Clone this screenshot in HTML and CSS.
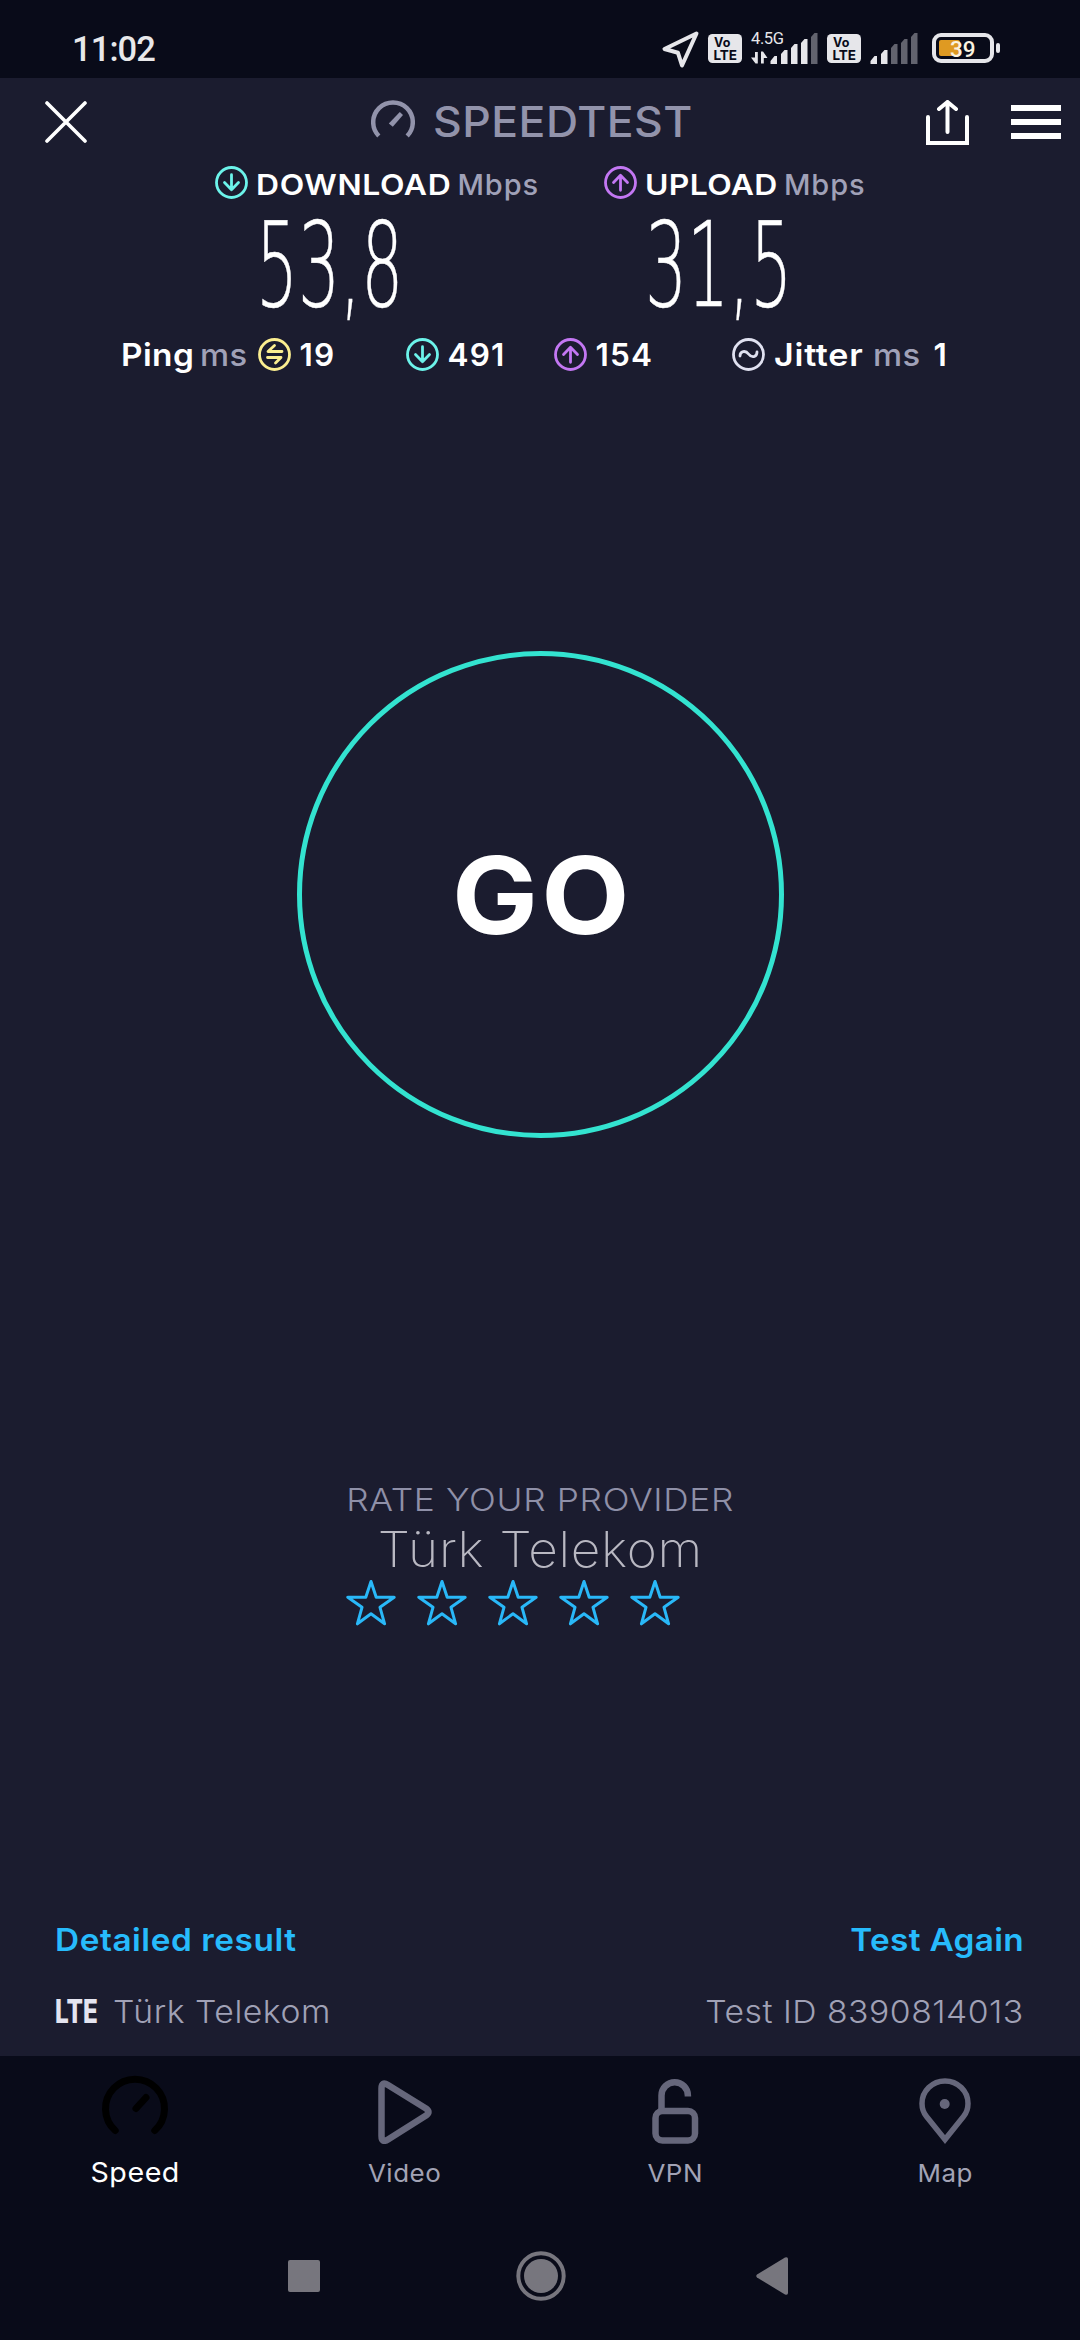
FILE: index.html
```
<!DOCTYPE html>
<html lang="en">
<head>
<meta charset="utf-8">
<title>Speedtest</title>
<link rel="stylesheet" href="styles.css">
</head>
<body>
<svg class="defs" width="0" height="0" aria-hidden="true">
  <symbol id="down" viewBox="0 0 33 33"><circle cx="16.5" cy="16.5" r="15"/><path d="M16.5 8.7v15M9.5 16.5l7 7.2 7-7.2"/></symbol>
  <symbol id="up" viewBox="0 0 33 33"><circle cx="16.5" cy="16.5" r="15"/><path d="M16.5 24.3v-15M9.5 16.5l7-7.2 7 7.2"/></symbol>
  <symbol id="star" viewBox="0 0 50 47"><path d="M25 2.500l5.200 15.700h18L34 28.300 38.600 44.800 25 34.800 11.400 44.800 16 28.300 1.800 18.200h18z"/></symbol>
</svg>

<header class="status">
  <span class="clock">11:02</span>
  <svg class="status-icons" width="340" height="40" viewBox="660 29 340 40">
    <path class="line" d="M696.500 33.500L664.500 49l13.500 3.800 4 12.700z"/>
    <g class="volte" transform="translate(708 34)"><rect width="34" height="29" rx="4.500"/><text x="6" y="13" font-size="12.500" textLength="16.500">Vo</text><text x="5.500" y="25.500" font-size="13.500" textLength="23.500">LTE</text></g>
    <text class="net" x="751" y="43.500" textLength="33">4.5G</text>
    <path class="fill" d="M755 52h2.800v11.500h-2.300l-4.500-6h4zM761 63.500h2.800V58h3.700l-4.500-6.500h-2z"/>
    <path class="fill" d="M770.500 64v-3l4-5h2.500v8zM781 64V54l3.500-4h3v14zM791 64V48l3.500-4h3v20zM801 64V43l3.500-4h3v25z"/>
    <path class="dim" d="M811 64V37l3.500-4h3v31z"/>
    <g class="volte" transform="translate(827 34)"><rect width="34" height="29" rx="4.500"/><text x="6" y="13" font-size="12.500" textLength="16.500">Vo</text><text x="5.500" y="25.500" font-size="13.500" textLength="23.500">LTE</text></g>
    <path class="fill" d="M870.500 64v-3l4-5h2.500v8zM881 64V54l3.500-4h3v14z"/>
    <path class="dim" d="M891 64V48l3.500-4h3v20zM901 64V43l3.500-4h3v25zM911 64V37l3.500-4h3v31z"/>
    <rect class="charge" x="939" y="40" width="21" height="16" rx="2"/>
    <rect class="line" x="934" y="35" width="58" height="26" rx="7"/>
    <rect class="fill" x="996" y="43" width="4" height="10" rx="2"/>
    <text class="level" x="950" y="56.700" textLength="25.500">39</text>
  </svg>
</header>

<main class="screen">
  <div class="appbar">
    <svg class="close" width="42" height="42" viewBox="0 0 42 42"><path d="M2 2l38 38M40 2L2 40"/></svg>
    <div class="brand">
      <svg width="44" height="38" viewBox="0 0 44 38"><path class="dial" d="M7.800 36A19.800 19.800 0 1 1 36.200 36"/><path class="needle" d="M17.800 23.500l11-11.500 3.200 3-10.200 11.700z"/></svg>
      <span>SPEEDTEST</span>
    </div>
    <svg class="share" width="43" height="45" viewBox="0 0 43 45"><path d="M2 17v26h39V17M21.500 32V2.500M13 9l8.500-7L30 9"/></svg>
    <div class="burger"><i></i><i></i><i></i></div>
  </div>

  <section class="titles">
    <svg class="ic teal"><use href="#down"/></svg><b class="dl">DOWNLOAD</b><span>Mbps</span>
    <svg class="ic purple"><use href="#up"/></svg><b class="ul">UPLOAD</b><span>Mbps</span>
  </section>
  <section class="speeds"><span>53,8</span><span>31,5</span></section>
  <section class="latency">
    <b class="ping">Ping</b><span class="ms">ms</span>
    <svg class="ic yellow" viewBox="0 0 33 33"><circle cx="16.500" cy="16.500" r="15"/><path d="M24 13.500H10l6.500-6M9.500 19.500H23l-5.500 5.500"/></svg><b>19</b>
    <svg class="ic teal"><use href="#down"/></svg><b>491</b>
    <svg class="ic purple"><use href="#up"/></svg><b>154</b>
    <svg class="ic pale" viewBox="0 0 33 33"><circle cx="16.500" cy="16.500" r="15"/><path d="M8 18c0-5 5.500-6 8.500-2s8.500 3.500 8.500-2"/></svg><b class="jit">Jitter</b><span class="ms">ms</span><b>1</b>
  </section>

  <div class="go"><span>GO</span></div>

  <section class="rate">
    <p class="ask">RATE YOUR PROVIDER</p>
    <p class="provider">Türk Telekom</p>
    <div class="stars">
      <svg><use href="#star"/></svg><svg><use href="#star"/></svg><svg><use href="#star"/></svg><svg><use href="#star"/></svg><svg><use href="#star"/></svg>
    </div>
  </section>

  <div class="row links"><a class="detail">Detailed result</a><a class="again">Test Again</a></div>
  <div class="row info"><span class="lte">LTE</span><span class="carrier">Türk Telekom</span><span class="testid">Test ID 8390814013</span></div>
</main>

<nav class="tabs">
  <div class="tab active"><svg viewBox="0 0 72 72"><path d="M16.200 58.500A29.500 29.500 0 1 1 55.800 58.500M37 36.500L47 25.500"/></svg><span>Speed</span></div>
  <div class="tab video"><svg viewBox="0 0 72 72"><path d="M12.500 16.500q0-7.500 6.500-3.500L57 36.500q5 3.500 0 7L19 67.500q-6.500 4-6.500-3.500z"/></svg><span>Video</span></div>
  <div class="tab vpn"><svg viewBox="0 0 72 72"><rect x="16.500" y="39" width="39.500" height="29.500" rx="7"/><path d="M22.500 39V23.500a13.200 13.200 0 0 1 26.400 0v1" stroke-linecap="butt"/></svg><span>VPN</span></div>
  <div class="tab map"><svg viewBox="0 0 72 72"><path stroke-linejoin="miter" d="M36 67.500L17.500 44.500Q13 39 13 31.500A23 22.500 0 0 1 59 31.500Q59 39 54.500 44.500z"/><circle class="dot" cx="35.700" cy="32" r="5"/></svg><span>Map</span></div>
</nav>
<footer class="system">
  <svg width="32" height="32" viewBox="0 0 32 32"><rect width="32" height="32" rx="2"/></svg>
  <svg class="home" width="50" height="50" viewBox="0 0 50 50"><circle cx="25" cy="25" r="17"/><circle class="ring" cx="25" cy="25" r="22.700"/></svg>
  <svg width="32" height="38" viewBox="0 0 32 38"><path d="M1 17.500L29 .500q3-1 3 1.500v34q0 2.500-3 1.500L1 20.500q-1.500-1.500 0-3z"/></svg>
</footer>
</body>
</html>
```
FILE: styles.css
```
* { box-sizing: border-box; }
body {
  margin: 0;
  width: 1080px;
  height: 2340px;
  display: flex;
  flex-direction: column;
  background: #090b19;
  color: #fff;
  font-family: Inter, "Liberation Sans", sans-serif;
  white-space: nowrap;
  overflow: hidden;
}
svg { display: block; flex: none; fill: none; stroke-linecap: round; stroke-linejoin: round; }
.defs { position: absolute; }
p { margin: 0; }
b { font-weight: 600; }

.status {
  height: 78px;
  padding: 20px 80px 0 72px;
  display: flex;
  align-items: center;
  justify-content: space-between;
  color: #e8e8ea;
}
.clock { font: 500 34.5px/40px Roboto, sans-serif; letter-spacing: -.9px; }
.status-icons { fill: #e6e6ea; font-family: Roboto, sans-serif; }
.status-icons .line { fill: none; stroke: #e6e6ea; stroke-width: 4; }
.status-icons .dim { fill: #62636e; }
.status-icons .charge { fill: #df9a22; }
.net { font-size: 16.5px; }
.level { font-size: 22.5px; font-weight: 500; fill: #fbf3e0; }
.volte text { fill: #090b19; font-family: Inter, sans-serif; font-weight: 700; }

.screen {
  height: 1978px;
  background: #1b1c2f;
  display: flex;
  flex-direction: column;
}
.appbar { height: 88px; display: flex; align-items: center; padding: 0 19px 0 45px; }
.close { stroke: #fff; stroke-width: 3.6; }
.brand { display: flex; align-items: center; margin-left: 284px; width: 555px; color: #9293ab; font: 500 42px/50px Inter, sans-serif; letter-spacing: .45px; }
.brand span { transform: scaleX(1.06); transform-origin: left; }
.brand svg { margin: -7px 18px 0 0; }
.dial { stroke: #9293ab; stroke-width: 4.5; stroke-linecap: butt; }
.needle { fill: #9293ab; }
.share { stroke: #fff; stroke-width: 4; stroke-linejoin: miter; }
.burger { display: flex; flex-direction: column; gap: 8px; margin-left: 42px; }
.burger i { width: 50px; height: 6px; background: #fff; }

.ic { width: 33px; height: 33px; stroke-width: 2.8; }
.teal { stroke: #6cf3ea; }
.purple { stroke: #c377f3; }
.yellow { stroke: #fbee90; }
.pale { stroke: #e0e1f0; }

/* The caption face is widened to read as a broad geometric sans. */
.dl, .ul, .ping, .jit, .ms, .detail, .carrier { transform-origin: left; }
.titles, .latency { display: grid; height: 33px; }
.titles { grid-template-columns: 40.5px 202px 146.5px 41px 139px 120px; padding-left: 215px; font-size: 29px; line-height: 37px; }
.titles span, .ms { color: #a0a1b8; font-weight: 500; }
.titles span { letter-spacing: .9px; }
.dl { letter-spacing: .55px; transform: scaleX(1.1); }
.ul { letter-spacing: .3px; transform: scaleX(1.1); }

.speeds { display: grid; grid-template-columns: 389px 389px; height: 133px; padding-left: 256px; }
.speeds span {
  width: 265px;
  font: 200 117px/133px "DejaVu Sans", sans-serif;
  transform: scaleX(.565);
  transform-origin: left;
  -webkit-text-stroke: .5px #fff;
}

.latency {
  margin-top: 6px;
  grid-template-columns: 79px 58px 41.5px 106.5px 41.5px 106.5px 41.5px 136.5px 41.5px 99px 61px 40px;
  padding-left: 121px;
  font-size: 31.5px;
  line-height: 33px;
  letter-spacing: 1.2px;
}
.ping { letter-spacing: .4px; transform: scaleX(1.06); }
.jit { letter-spacing: .7px; transform: scaleX(1.08); }
.ms { letter-spacing: .4px; transform: scaleX(1.04); }

.go {
  width: 487px;
  height: 487px;
  margin: 280px 0 0 297px;
  border: 5.5px solid #33e3d0;
  border-radius: 50%;
  display: flex;
  align-items: center;
  justify-content: center;
  font-size: 107px;
  font-weight: 650;
  line-height: 120px;
}
.go span { transform: scaleX(1.07); letter-spacing: 3px; margin-right: -3px; }

.rate { margin-top: 341px; display: flex; flex-direction: column; align-items: center; }
.ask { font-size: 31.5px; font-weight: 300; line-height: 41px; letter-spacing: .6px; transform: scaleX(1.12); color: #8f90a8; }
.provider { font-size: 48.5px; font-weight: 250; line-height: 59px; letter-spacing: .65px; transform: scaleX(1.06); color: #b9b8c2; }
.stars { display: flex; gap: 21px; margin-right: 54px; }
.stars svg { width: 50px; height: 47px; stroke: #29b8f8; stroke-width: 3; }

.row { display: flex; padding: 0 56px 0 55px; font-size: 31.5px; line-height: 40px; }
.links { margin-top: 294px; justify-content: space-between; font-weight: 600; color: #27bbfc; }
.detail { letter-spacing: .5px; transform: scaleX(1.06); }
.again { letter-spacing: .3px; transform: scaleX(1.06); transform-origin: right; }
.info { margin-top: 32px; color: #a0a1b6; font-weight: 300; }
.lte { width: 58px; font-size: 32px; font-weight: 800; color: #e4e4f0; transform: scaleX(.76); transform-origin: left; }
.carrier { letter-spacing: .5px; transform: scaleX(1.07); }
.testid { margin-left: auto; letter-spacing: .47px; transform: scaleX(1.07); transform-origin: right; }

.tabs { height: 164px; display: grid; grid-template-columns: repeat(4, 1fr); padding-top: 16px; }
.tab { display: flex; flex-direction: column; align-items: center; color: #a2a3b5; font-size: 24.5px; line-height: 38px; letter-spacing: .5px; }
.tab svg { width: 72px; height: 72px; stroke: #66677b; stroke-width: 6.5; }
.tab span { margin-top: 10px; transform: scaleX(1.06); }
.tab .dot { fill: #66677b; stroke: none; }
.active { color: #fff; font-size: 27px; }
.active svg { stroke: #000; stroke-width: 7; }
.map svg { stroke-width: 5.5; }

.system { display: flex; align-items: center; height: 111px; padding-left: 288px; }
.system svg { fill: #77767e; }
.system .home { margin: 0 190px 0 195.5px; }
.system .ring { fill: none; stroke: #77767e; stroke-width: 4; }
```
